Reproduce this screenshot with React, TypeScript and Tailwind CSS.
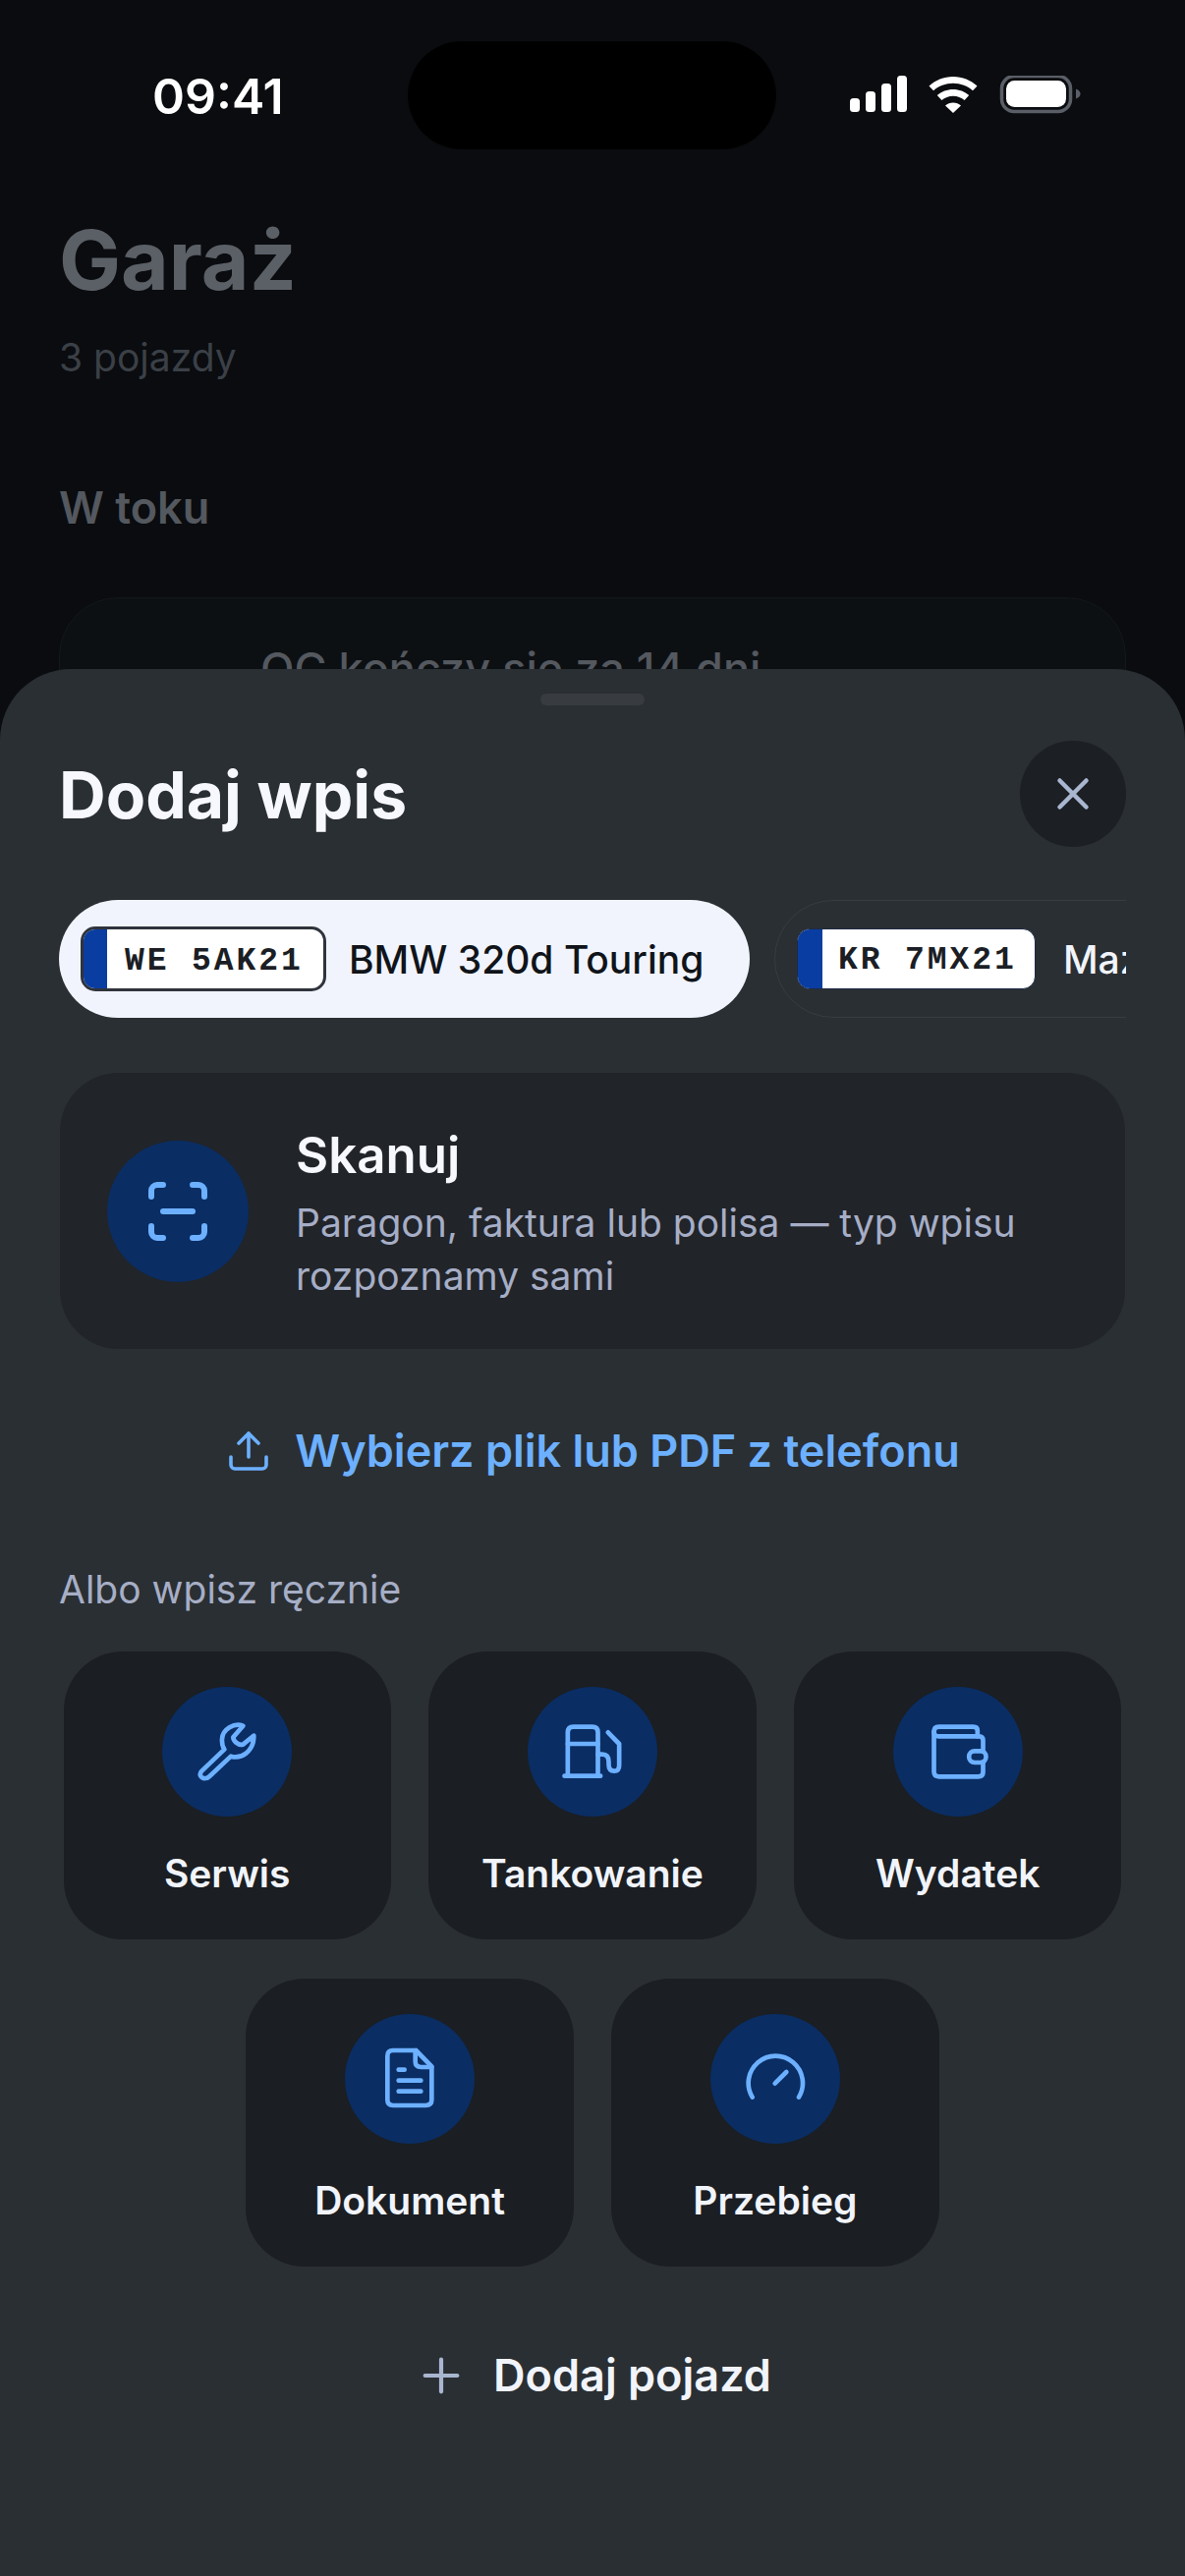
import { FC, ReactNode } from "react";
import { Plus, ScanLine, Upload, X } from "lucide-react";

const IconG: FC<{ tx: number; ty: number; children: ReactNode }> = ({ tx, ty, children }) => (
  <svg width="132" height="132" viewBox="0 0 132 132" fill="none" stroke="#6cb0ff" strokeLinecap="round" strokeLinejoin="round">
    <g transform={`translate(${tx} ${ty}) scale(0.33333)`} strokeWidth="14">{children}</g>
  </svg>
);

const WrenchI = () => (
  <IconG tx={-5} ty={3}>
    <path d="M262 110C235 100 200 120 198 150C197 165 200 175 205 182L136 248C125 260 135 272 148 270C152 270 156 268 160 264L225 203C255 212 295 190 295 140L262 167C245 170 232 155 232 145Z" />
  </IconG>
);
const FuelI = () => (
  <IconG tx={2.5} ty={3}>
    <path d="M115 262V130Q115 113 132 113H190Q207 113 207 130V262" />
    <path d="M105 263H215" />
    <path d="M115 165H207" />
    <path d="M207 197H220Q240 197 240 220V228Q240 248 257 248Q272 248 272 230V165L238 130" />
  </IconG>
);
const WalletI = () => (
  <IconG tx={1.5} ty={3}>
    <path d="M253 142V125Q253 113 240 113H135Q120 113 120 128" />
    <path d="M120 128Q120 142 135 142H258Q270 142 270 155V187" />
    <path d="M270 222V252Q270 265 255 265H135Q120 265 120 250V128" />
    <rect x="227" y="187" width="52" height="35" rx="17" />
  </IconG>
);
const DocI = () => (
  <IconG tx={-1} ty={0}>
    <path d="M218 111H150Q133 111 133 128V262Q133 279 150 279H250Q268 279 268 262V160L220 111" />
    <path d="M218 112V145Q218 162 235 162H268" />
    <path d="M167 170H185" />
    <path d="M167 203H235" />
    <path d="M167 236H235" />
  </IconG>
);
const GaugeI = () => (
  <IconG tx={-3} ty={0}>
    <path d="M137 254A83 83 0 1 1 279 254" />
    <path d="M206 212L241 177" />
  </IconG>
);

const Tile: FC<{ label: string; icon: ReactNode }> = ({ label, icon }) => (
  <div className="flex h-[293px] w-[333.4px] flex-col items-center rounded-[60px] bg-[#1b1e22] pt-[36px]">
    <div className="h-[132px] w-[132px] rounded-full bg-[#0a2d63]">{icon}</div>
    <div className="mt-[31px] text-[39px] leading-[54px] font-semibold text-[#f1f4fb]">{label}</div>
  </div>
);

const Plate: FC<{ text: string; heavy?: boolean }> = ({ text, heavy }) => (
  <div
    className={
      heavy
        ? "flex h-[66px] w-[250px] shrink-0 overflow-hidden rounded-[15px] border-[3px] border-[#2f333b] bg-white"
        : "flex h-[62px] w-[243px] shrink-0 overflow-hidden rounded-[13px] border-[1.5px] border-[#1d2a44] bg-white"
    }
  >
    <div className={heavy ? "h-full w-[24px] shrink-0 bg-[#0a3da1]" : "h-full w-[25px] shrink-0 bg-[#0a3da1]"} />
    <div
      className={
        heavy
          ? "flex-1 pl-[18px] font-['Liberation_Mono',monospace] text-[33px] leading-[66px] font-bold tracking-[2.9px] whitespace-pre text-[#1b1e25]"
          : "flex-1 pl-[16px] font-['Liberation_Mono',monospace] text-[33px] leading-[64px] font-bold tracking-[2.9px] whitespace-pre text-[#1b1e25]"
      }
    >
      {text}
    </div>
  </div>
);

export default function App() {
  return (
    <div className="relative h-[2622px] w-[1206px] overflow-hidden bg-[#0a0c0f] font-['Inter',sans-serif]">
      <div className="flex h-[152px] items-center pt-[42px]">
        <div className="w-[415px] pt-[2px] pl-[155px] text-[50px] leading-[60px] font-semibold text-white">09:41</div>
        <div className="h-[110px] w-[375px] rounded-full bg-black" />
        <div className="flex items-center pl-[75px]">
          <svg width="235" height="40" viewBox="0 0 235 40" fill="#fff">
            <rect x="0" y="23" width="10" height="14" rx="3.5" />
            <rect x="16" y="16" width="10" height="21" rx="3.5" />
            <rect x="32" y="8" width="10" height="29" rx="3.5" />
            <rect x="48" y="0" width="10" height="37" rx="3.5" />
            <path d="M105 1c-9.500 0-18 3.600-24.500 9.500l4.500 4.800C90.300 10.600 97.300 7.800 105 7.800s14.700 2.800 20 7.500l4.500-4.800C123 4.600 114.500 1 105 1Z" />
            <path d="M105 14c-6.200 0-11.900 2.300-16.200 6.100l4.600 4.900c3.100-2.600 7.200-4.200 11.600-4.200s8.500 1.600 11.600 4.200l4.600-4.900C116.900 16.300 111.200 14 105 14Z" />
            <path d="M105 27.500c-3.100 0-5.800 1.100-8 2.900l8 7.600 8-7.600c-2.200-1.800-4.900-2.900-8-2.900Z" />
            <rect x="154.500" y="0.500" width="70" height="36" rx="12.500" fill="none" stroke="#5a5e66" strokeWidth="3.500" />
            <rect x="159" y="5" width="61" height="27" rx="8.500" />
            <path d="M230 13.500c3 1 4.500 3 4.500 5s-1.500 4-4.500 5Z" fill="#5a5e66" />
          </svg>
        </div>
      </div>

      <div className="px-[60px]">
        <div className="mt-[63px] text-[84px] leading-[100px] font-bold text-[#5b5f66]">Garaż</div>
        <div className="mt-[22px] text-[39px] leading-[54px] text-[#3b4047]">3 pojazdy</div>
        <div className="mt-[96px] text-[45px] leading-[60px] font-semibold text-[#54585f]">W toku</div>
        <div className="mt-[61px] h-[240px] rounded-[60px] border-[1.500px] border-[#14171b] bg-[#0d1013] pt-[42px] pl-[204px]">
          <div className="text-[45px] leading-[60px] font-medium text-[#54585f]">OC kończy się za 14 dni</div>
        </div>
      </div>

      <div className="absolute inset-x-0 bottom-0 h-[1941px] rounded-t-[72px] bg-[#2a2f33] px-[60px] pt-[25px]">
        <div className="mx-auto h-[12px] w-[106px] rounded-full bg-[#383c41]" />
        <div className="mt-[36px] flex h-[108px] items-center justify-between">
          <div className="pt-[1px] text-[66px] leading-[80px] font-bold text-[#f6f8fd]">Dodaj wpis</div>
          <div className="flex h-[108px] w-[108px] items-center justify-center rounded-full bg-[#1c1f24]">
            <X size={54} color="#a9b6d0" strokeWidth={2} />
          </div>
        </div>

        <div className="mt-[54px] flex h-[120px] gap-[25px] overflow-hidden">
          <div className="flex h-[120px] w-[703px] shrink-0 items-center gap-[23px] rounded-full bg-[#f1f4fd] pl-[22px]">
            <Plate text="WE 5AK21" heavy />
            <div className="pt-[2px] text-[39px] leading-[56px] font-medium whitespace-nowrap text-[#10141a]">BMW 320d Touring</div>
          </div>
          <div className="flex h-[120px] w-[600px] shrink-0 items-center gap-[28px] rounded-full border-[1.500px] border-[#383c42] pl-[22px]">
            <Plate text="KR 7MX21" />
            <div className="pt-[2px] text-[39px] leading-[56px] font-medium whitespace-nowrap text-[#f1f4fb]">Mazda CX-5</div>
          </div>
        </div>

        <div className="mx-[1px] mt-[56px] flex h-[281px] items-center rounded-[60px] bg-[#212429] pl-[48px]">
          <div className="flex h-[144px] w-[144px] shrink-0 items-center justify-center rounded-full bg-[#0a2d63]">
            <ScanLine size={72} color="#6cb0ff" strokeWidth={2} />
          </div>
          <div className="ml-[48px] w-[760px] pt-[4px]">
            <div className="text-[51px] leading-[64px] font-semibold text-[#f6f8fd]">Skanuj</div>
            <div className="mt-[10px] text-[39px] leading-[54px] text-[#a6aec6]">
              Paragon, faktura lub polisa — typ wpisu
              <br />
              rozpoznamy sami
            </div>
          </div>
        </div>

        <div className="mt-[74px] flex h-[60px] items-center justify-center gap-[23px]">
          <Upload size={48} color="#6cb0ff" strokeWidth={1.8} />
          <div className="text-[45px] leading-[60px] font-semibold text-[#6cb0ff]">Wybierz plik lub PDF z telefonu</div>
        </div>

        <div className="mt-[84px] text-[39px] leading-[54px] text-[#a6aec6]">Albo wpisz ręcznie</div>

        <div className="mt-[36px] flex flex-wrap justify-center gap-x-[38.4px] gap-y-[40px]">
          <Tile label="Serwis" icon={<WrenchI />} />
          <Tile label="Tankowanie" icon={<FuelI />} />
          <Tile label="Wydatek" icon={<WalletI />} />
          <Tile label="Dokument" icon={<DocI />} />
          <Tile label="Przebieg" icon={<GaugeI />} />
        </div>

        <div className="mt-[81px] flex h-[60px] items-center justify-center gap-[25px]">
          <Plus size={56} color="#a9b6d0" strokeWidth={1.8} />
          <div className="text-[45px] leading-[60px] font-semibold text-[#f1f4fb]">Dodaj pojazd</div>
        </div>
      </div>
    </div>
  );
}
